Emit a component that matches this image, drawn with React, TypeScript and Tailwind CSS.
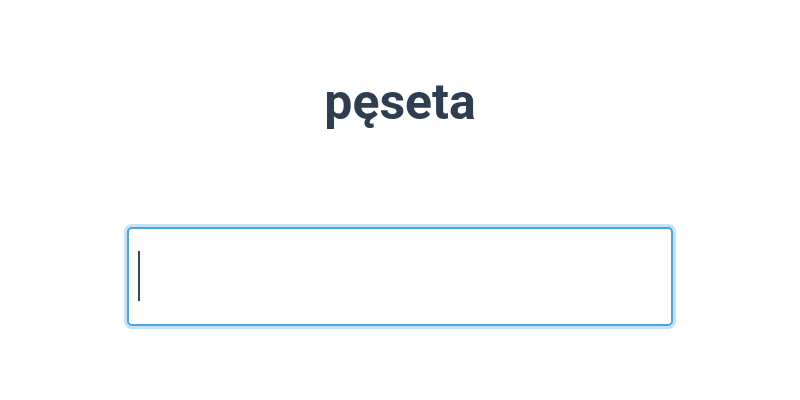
export default function App() {
  return (
    <div className="min-h-screen bg-white flex flex-col items-center pt-[72px]">
      <h1 className="text-[50px] leading-[60px] font-bold text-[#2c3e50] font-['Roboto',sans-serif]">pęseta</h1>
      <div className="relative mt-[95px] w-[546px] h-[99px]">
        <input
          className="w-full h-full rounded-[5px] border-2 border-[#4aa3e2] bg-white outline-none ring-[3px] ring-[#c6e2f7] px-3 text-[40px] caret-transparent font-['Roboto',sans-serif]"
          aria-label="word"
        />
        <span className="pointer-events-none absolute left-[11px] top-[24px] w-[2px] h-[50px] bg-[#3d4a5a]" />
      </div>
    </div>
  )
}
